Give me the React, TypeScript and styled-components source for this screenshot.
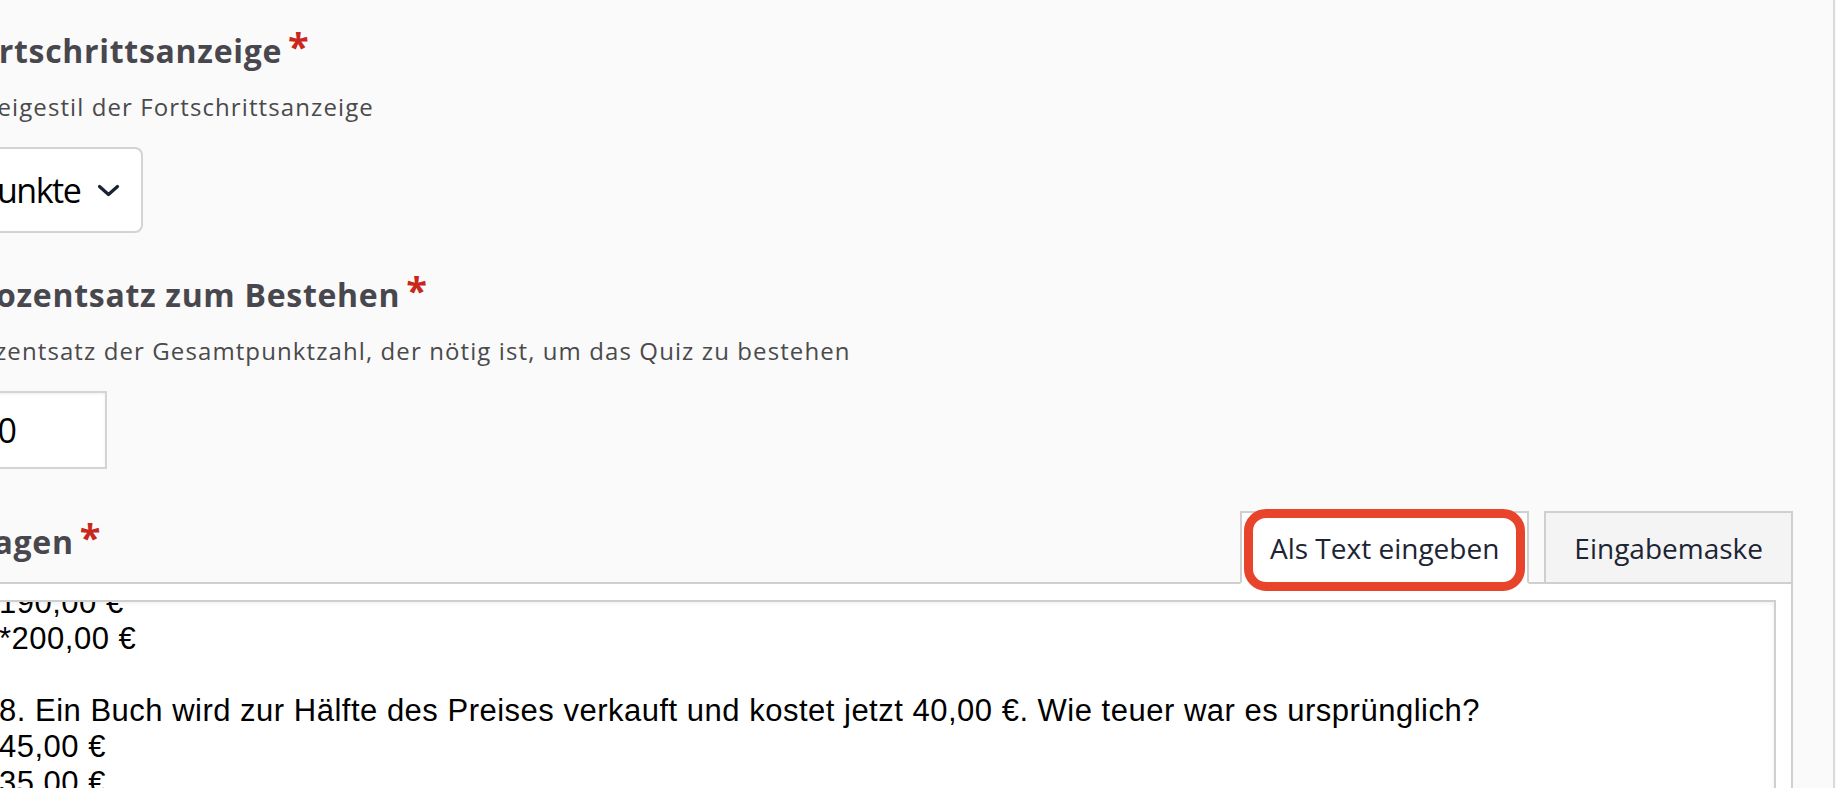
import React from "react";
import styled, { createGlobalStyle } from "styled-components";

const GlobalStyle = createGlobalStyle`
  html, body {
    margin: 0;
    padding: 0;
    background: #fafafa;
    overflow: hidden;
  }
  body {
    font-family: "Open Sans", "Liberation Sans", sans-serif;
  }
  * { box-sizing: border-box; }
`;

const Page = styled.div`
  width: 1835px;
  height: 788px;
  overflow: hidden;
  background: #fafafa;
  border-right: 2px solid #dadada;
  padding-right: 40px;
`;

const Form = styled.div`
  margin-left: -40px;
  padding-top: 31px;
  display: flex;
  flex-direction: column;
`;

const Field = styled.div`
  display: flex;
  flex-direction: column;
  align-items: flex-start;
  margin-bottom: 42px;
`;

const Label = styled.div<{ $inRow?: boolean }>`
  font-size: 32px;
  font-weight: 700;
  line-height: 40px;
  letter-spacing: 0.7px;
  color: #48474e;
  white-space: nowrap;
  margin-bottom: ${(p) => (p.$inRow ? "20px" : "0")};
`;

const Required = styled.span`
  color: #c9271d;
  font-size: 38px;
  font-weight: 700;
  line-height: 0;
  letter-spacing: 0;
  margin-left: 6px;
  vertical-align: 2px;
`;

const Description = styled.div`
  margin-top: 20px;
  margin-left: -7px;
  font-size: 24px;
  line-height: 32px;
  letter-spacing: 1.1px;
  color: #4a4a4c;
  white-space: nowrap;
`;

const SelectBox = styled.div`
  margin-top: 24px;
  width: 183px;
  height: 86px;
  border: 2px solid #d3d3d3;
  border-radius: 8px;
  background: #fff;
  display: flex;
  align-items: center;
  justify-content: space-between;
  padding: 0 21px 0 16px;
  font-size: 34px;
  letter-spacing: -1.5px;
  color: #000;
`;

const NumberBox = styled.div`
  margin-top: 24px;
  width: 147px;
  height: 78px;
  border: 2px solid #d4d4d4;
  background: #fff;
  box-shadow: inset 0 1px 3px rgba(0, 0, 0, 0.07);
  display: flex;
  align-items: center;
  padding-left: 16px;
  font-size: 34px;
  color: #000;
`;

const TabRow = styled.div`
  display: flex;
  align-items: flex-end;
  justify-content: space-between;
  border-bottom: 2px solid #cfcfcf;
`;

const Tabs = styled.div`
  display: flex;
  gap: 15px;
`;

const Tab = styled.div<{ $active?: boolean }>`
  position: relative;
  margin-bottom: -2px;
  padding: 16px 28px 15px;
  font-size: 28px;
  line-height: 38px;
  color: #1d2433;
  white-space: nowrap;
  border: 2px solid #cfcfcf;
  border-bottom-color: ${(p) => (p.$active ? "#fff" : "#cfcfcf")};
  background: ${(p) => (p.$active ? "#fff" : "#f4f4f4")};
`;

const Highlight = styled.div`
  position: absolute;
  left: 2px;
  right: 2px;
  top: -4px;
  bottom: -9px;
  border: 9px solid #e8432b;
  border-radius: 22px;
  pointer-events: none;
`;

const Panel = styled.div`
  background: #fff;
  border-right: 2px solid #cfcfcf;
  padding: 16px 15px 0 15px;
`;

const TextArea = styled.div`
  height: 400px;
  border: 2px solid #cfcfcf;
  background: #fff;
  box-shadow: inset 0 1px 5px rgba(0, 0, 0, 0.08);
  overflow: hidden;
  padding-left: 22px;
  font-family: "Liberation Sans", Arial, sans-serif;
  font-size: 31px;
  line-height: 36px;
  letter-spacing: 0.5px;
  color: #000;
  white-space: pre;
`;

const ScrolledText = styled.div`
  margin-top: -89px;
`;

const Chevron = () => (
  <svg width="23" height="13" viewBox="0 0 23 13" aria-hidden="true">
    <path
      d="M2.5 2.5 L11.5 10.5 L20.5 2.5"
      fill="none"
      stroke="#1b2236"
      strokeWidth="3.2"
      strokeLinecap="round"
      strokeLinejoin="round"
    />
  </svg>
);

const questionText = [
  "7. Ein Fahrrad kostet 250,00 €. Es wird um 20 % reduziert. Wie viel kostet es jetzt?",
  "180,00 €",
  "190,00 €",
  "*200,00 €",
  "",
  "8. Ein Buch wird zur Hälfte des Preises verkauft und kostet jetzt 40,00 €. Wie teuer war es ursprünglich?",
  "45,00 €",
  "35,00 €",
  "*80,00 €",
  "20,00 €",
].join("\n");

export default function App() {
  return (
    <>
      <GlobalStyle />
      <Page>
        <Form>
          <Field>
            <Label>
              Fortschrittsanzeige<Required>*</Required>
            </Label>
            <Description>Anzeigestil der Fortschrittsanzeige</Description>
            <SelectBox role="combobox">
              <span>Punkte</span>
              <Chevron />
            </SelectBox>
          </Field>

          <Field>
            <Label>
              Prozentsatz zum Bestehen<Required>*</Required>
            </Label>
            <Description>
              Prozentsatz der Gesamtpunktzahl, der nötig ist, um das Quiz zu bestehen
            </Description>
            <NumberBox role="textbox">50</NumberBox>
          </Field>

          <div>
            <TabRow>
              <Label $inRow>
                Fragen<Required>*</Required>
              </Label>
              <Tabs>
                <Tab $active>
                  Als Text eingeben
                  <Highlight />
                </Tab>
                <Tab>Eingabemaske</Tab>
              </Tabs>
            </TabRow>
            <Panel>
              <TextArea role="textbox">
                <ScrolledText>{questionText}</ScrolledText>
              </TextArea>
            </Panel>
          </div>
        </Form>
      </Page>
    </>
  );
}
